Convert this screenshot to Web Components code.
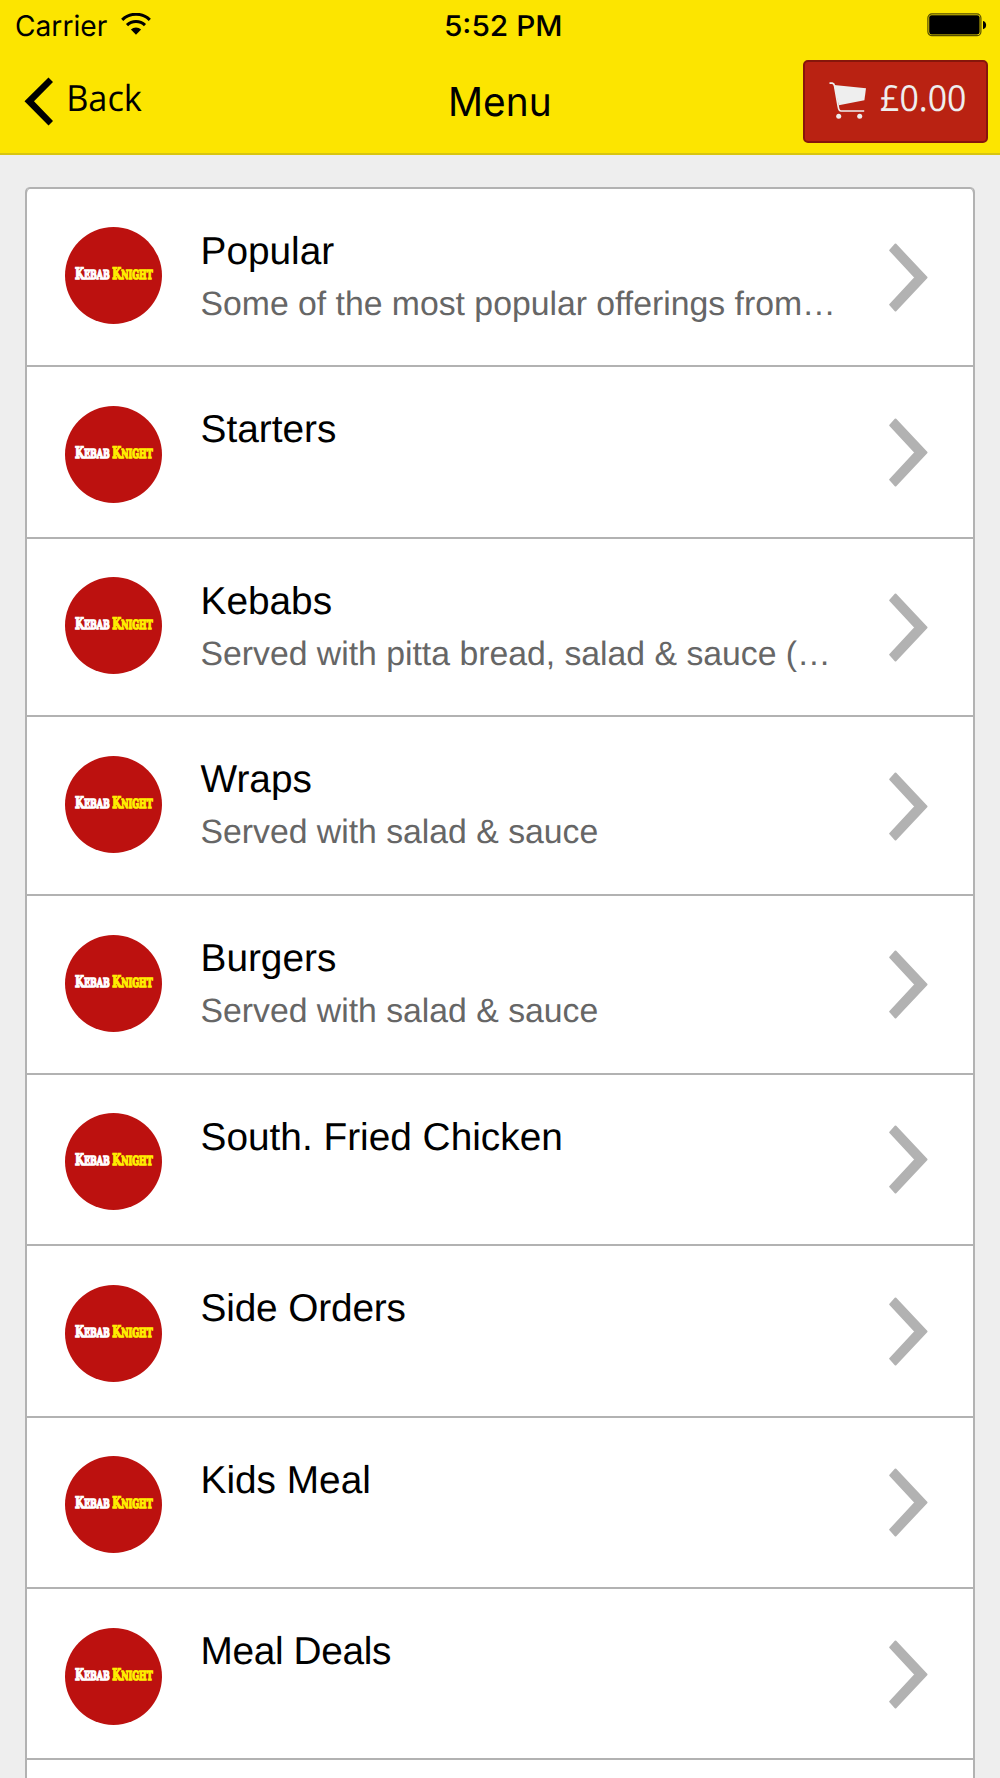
<!DOCTYPE html>
<html lang="en">
<head>
<meta charset="utf-8">
<title>Menu</title>
<style>
html, body { margin: 0; height: 1778px; overflow: hidden; background: #eeeeee; }
body { font-family: "Liberation Sans", Arial, sans-serif; color: #000; text-rendering: geometricPrecision; }
</style>
</head>
<body>
<menu-app></menu-app>
<script>
function define(name, html, setup) {
  const template = document.createElement('template');
  template.innerHTML = html;
  customElements.define(name, class extends HTMLElement {
    connectedCallback() {
      if (this.shadowRoot) return;
      this.attachShadow({ mode: 'open' }).appendChild(template.content.cloneNode(true));
      if (setup) setup(this, this.shadowRoot);
    }
  });
}

/* Text squeezed or stretched so its visible glyphs span exactly `span` pixels. */
define('fit-text', `
<style>
:host { display: block; white-space: nowrap; flex: none; }
span { display: inline-block; transform-origin: 0 50%; }
</style><span><slot></slot></span>`, (host, root) => {
  const ctx = document.createElement('canvas').getContext('2d');
  const cs = getComputedStyle(host);
  ctx.font = cs.fontWeight + ' ' + cs.fontSize + ' ' + cs.fontFamily;
  const text = root.querySelector('slot').assignedNodes({ flatten: true }).map(n => n.textContent).join('');
  const m = ctx.measureText(text);
  const span = parseFloat(host.getAttribute('span'));
  const scale = span / (m.actualBoundingBoxRight + m.actualBoundingBoxLeft);
  host.style.width = span + 'px';
  root.querySelector('span').style.transform =
    'translateX(' + m.actualBoundingBoxLeft * scale + 'px) scaleX(' + scale + ')';
});

define('wifi-icon', `
<style>:host{display:block;width:30px;height:22px}svg{display:block}</style>
<svg width="30" height="22" viewBox="0 0 30 22">
  <path d="M1.2 6.8A20 20 0 0 1 28.8 6.8" fill="none" stroke="#000" stroke-width="3.1"/>
  <path d="M6 12.1A13 13 0 0 1 24 12.1" fill="none" stroke="#000" stroke-width="3.1"/>
  <path d="M9.9 16.6A7.3 7.3 0 0 1 20.1 16.6L15 21.7Z"/>
</svg>`);

define('battery-icon', `
<style>:host{display:block;width:60px;height:24px}svg{display:block}</style>
<svg width="60" height="24" viewBox="0 0 60 24">
  <rect x=".9" y=".9" width="53" height="21.8" rx="4" fill="none" stroke="#554d00" stroke-width="1.2"/>
  <rect x="2.2" y="2.2" width="50.4" height="19.2" rx="2.4"/>
  <path d="M56 8C60.2 8.6 60.2 15.6 56 16.2Z"/>
</svg>`);

define('status-bar', `
<style>
:host { display: grid; grid-template-columns: 1fr auto 1fr; height: 50px; padding: 0 13px 0 16px;
  box-sizing: border-box; font: 400 28.5px/52px Inter, sans-serif; }
.left { display: flex; gap: 13px; }
.time { font-weight: 500; margin-left: 4px; }
wifi-icon { margin-top: 13px; }
battery-icon { justify-self: end; margin-top: 13px; }
</style>
<div class="left"><fit-text span="91.5">Carrier</fit-text><wifi-icon></wifi-icon></div>
<fit-text class="time" span="114.5">5:52 PM</fit-text>
<battery-icon></battery-icon>`);

define('back-button', `
<style>
:host { display: flex; align-items: flex-start; gap: 16px; font: 400 36px/50px "Open Sans", sans-serif; }
svg { display: block; margin-top: 27px; }
fit-text { margin-top: 23px; }
</style>
<svg width="29" height="50" viewBox="0 0 29 50"><path d="M24.5 .5L29 5L10 24.3L29 44L24.5 48.5L.5 24.3Z"/></svg>
<fit-text span="73"><slot></slot></fit-text>`);

define('cart-icon', `
<style>:host{display:block;width:38px;height:38px}svg{display:block}</style>
<svg width="38" height="38" viewBox="829 82 38 38" fill="#eee">
  <path d="M829.5 83.2H832.3Q834 83.5 834.6 86L838.2 106.5Q838.8 111 841 111H864.2" fill="none" stroke="#eee" stroke-width="1.7"/>
  <path d="M834 85L866 88.3L864.4 100.2L838.8 105.2Z"/>
  <circle cx="838.7" cy="116.2" r="2.5"/><circle cx="859.7" cy="116.2" r="2.5"/>
</svg>`);

define('basket-button', `
<style>
:host { display: flex; align-items: flex-start; gap: 14px; width: 185px; height: 83px; box-sizing: border-box;
  padding-left: 24px; border: 2px solid #86160b; border-radius: 5px; background: #b92212; color: #eee;
  font: 400 36px/50px "Open Sans", sans-serif; }
cart-icon { margin-top: 20px; }
fit-text { margin-top: 11px; }
</style>
<cart-icon></cart-icon><fit-text span="84"><slot></slot></fit-text>`);

define('nav-bar', `
<style>
:host { display: grid; grid-template-columns: 1fr auto 1fr; height: 105px; box-sizing: border-box;
  padding: 0 12px 0 24px; border-bottom: 2px solid #d8c511; }
.title { font: 400 40px/60px Inter, sans-serif; margin: 22px 12px 0 0; }
basket-button { justify-self: end; margin-top: 10px; }
</style>
<back-button>Back</back-button>
<fit-text class="title" span="98">Menu</fit-text>
<basket-button>£0.00</basket-button>`);

define('app-header', `
<style>:host{display:block;background:#fce500}</style>
<status-bar></status-bar><nav-bar></nav-bar>`);

define('brand-badge', `
<style>
:host { display: block; width: 97px; height: 97px; box-sizing: border-box; padding: 36px 0 0 10px;
  border-radius: 50%; background: #bc110f; flex: none; }
div { display: flex; gap: 4px; width: max-content; transform: scaleX(.64); transform-origin: 0 0;
  font: 700 12.5px/22px "DejaVu Serif", "Liberation Serif", serif; }
span { display: block; color: #fff; -webkit-text-stroke: 1.4px currentColor; }
span::first-letter { font-size: 16px; }
.b { color: #ffee00; }
</style>
<div><span>KEBAB</span><span class="b">KNIGHT</span></div>`);

define('chevron-icon', `
<style>:host{display:block;width:39px;height:69px;flex:none}svg{display:block}</style>
<svg width="39" height="69" viewBox="0 0 39 69">
  <path d="M6.5 1.5L37.5 34.5L6.5 67.5L1.2 61.700L26.500 34.500L1.200 7.300Z" fill="#b2b2b2" stroke="#b2b2b2" stroke-width="2" stroke-linejoin="round"/>
</svg>`);

define('menu-row', `
<style>
:host { display: flex; align-items: flex-start; box-sizing: border-box; height: 171.44px;
  border-top: 2px solid #b2b2b2; padding: 0 45px 0 38px; }
:host([tall]) { height: 178.7px; }
:host(:first-child) { border-top-color: transparent; }
brand-badge { margin-top: 38.7px; }
.copy { flex: 1; margin: 37.1px 0 0 38.5px; line-height: 52px; white-space: nowrap; }
.title { font-size: 38.8px; letter-spacing: var(--title-tracking, 0); }
.note { font-size: 33.75px; color: #666; }
chevron-icon { align-self: center; margin-top: .8px; }
</style>
<brand-badge></brand-badge>
<div class="copy"><div class="title"><slot></slot></div><div class="note"><slot name="note"></slot></div></div>
<chevron-icon></chevron-icon>`);

/* The blank start of the next row, running off the bottom of the screen. */
define('menu-row-edge', `<style>:host{display:block;height:60px;border-top:2px solid #b2b2b2}</style>`);

define('menu-list', `
<style>
:host { display: block; margin: 31.5px 25px 0; border: 2px solid #b2b2b2; border-top: 0; border-radius: 5px;
  background: #fff; box-shadow: inset 0 2px 0 #b2b2b2; }
</style><slot></slot>`);

define('menu-app', `
<style>:host{display:block;width:1000px;height:1778px;overflow:hidden;background:#eee}</style>
<app-header></app-header>
<menu-list>
  <menu-row tall>Popular<span slot="note">Some of the most popular offerings from…</span></menu-row>
  <menu-row>Starters</menu-row>
  <menu-row tall>Kebabs<span slot="note">Served with pitta bread, salad &amp; sauce (…</span></menu-row>
  <menu-row tall>Wraps<span slot="note">Served with salad &amp; sauce</span></menu-row>
  <menu-row tall>Burgers<span slot="note">Served with salad &amp; sauce</span></menu-row>
  <menu-row>South. Fried Chicken</menu-row>
  <menu-row style="--title-tracking:-.15px">Side Orders</menu-row>
  <menu-row>Kids Meal</menu-row>
  <menu-row style="--title-tracking:-.35px">Meal Deals</menu-row>
  <menu-row-edge></menu-row-edge>
</menu-list>`);
</script>
</body>
</html>
